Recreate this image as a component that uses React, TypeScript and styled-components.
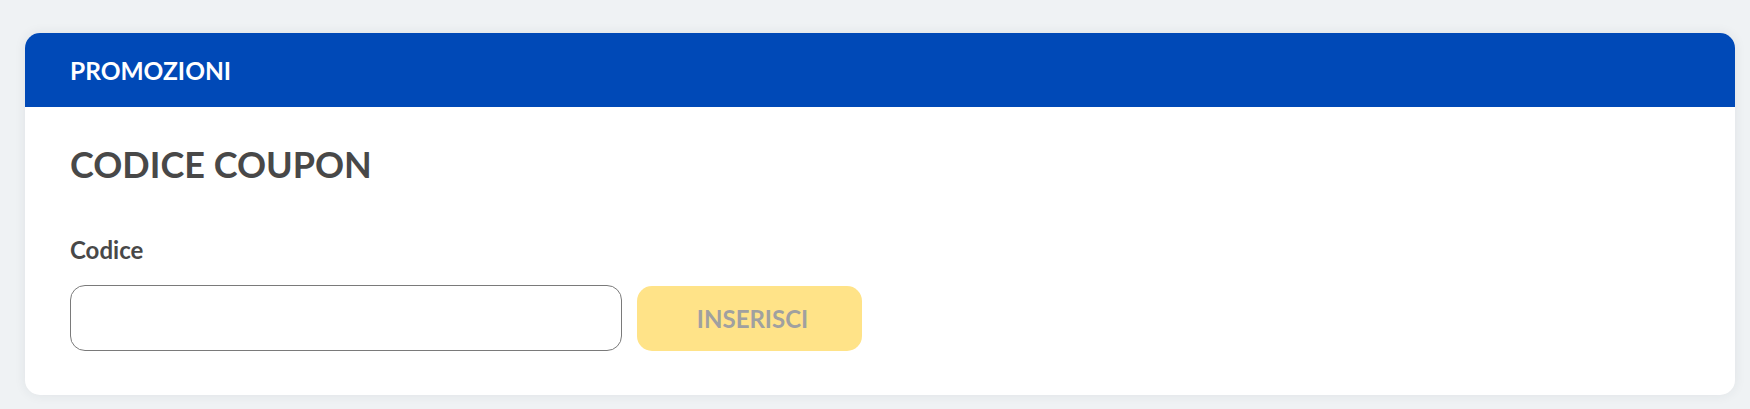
import * as React from 'react';
import styled, { createGlobalStyle } from 'styled-components';

const GlobalStyle = createGlobalStyle`
  html, body {
    margin: 0;
    padding: 0;
    background: #eff2f4;
    font-family: Lato, 'Open Sans', sans-serif;
  }
`;

const Page = styled.div`
  padding: 33px 15px 14px 25px;
`;

const Card = styled.section`
  background: #fff;
  border-radius: 15px;
  box-shadow: 0 0 12px rgba(40, 50, 60, 0.08);
  overflow: hidden;
`;

const CardHeader = styled.header`
  display: flex;
  align-items: center;
  height: 74px;
  padding: 0 45px;

  background: #0049b7;
  color: #fff;
`;

const HeaderTitle = styled.h2`
  margin: 0;
  font-size: 24.5px;
  font-weight: 700;
`;

const CardBody = styled.div`
  display: flex;
  flex-direction: column;
  padding: 38px 45px 44px;
`;

const SectionTitle = styled.h3`
  margin: 0 0 55px 0;
  font-size: 36px;
  line-height: 38px;
  font-weight: 700;
  color: #484848;
`;

const Label = styled.label`
  margin-bottom: 23px;
  font-size: 24px;
  line-height: 24px;
  font-weight: 700;
  color: #484848;
`;

const FormRow = styled.div`
  display: flex;
  align-items: center;
  gap: 15px;
`;

const TextInput = styled.input`
  box-sizing: border-box;
  width: 552px;
  height: 66px;
  padding: 0 18px;

  font-family: inherit;
  font-size: 20px;
  color: #484848;

  background: #fff;
  border: 1px solid #7a7a7a;
  border-radius: 15px;
  outline: none;
`;

const SubmitButton = styled.button<{ $disabled?: boolean }>`
  box-sizing: border-box;
  width: 225px;
  height: 65px;
  padding: 0 0 0 6px;

  font-family: inherit;
  font-size: 24px;
  font-weight: 700;
  color: ${(p) => (p.$disabled ? '#a0a0a0' : '#333')};

  background: ${(p) => (p.$disabled ? '#ffe388' : '#ffc600')};
  border: none;
  border-radius: 15px;
`;

const App: React.FunctionComponent = () => {
  const [code, setCode] = React.useState('');

  return (
    <Page>
      <GlobalStyle />
      <Card>
        <CardHeader>
          <HeaderTitle>PROMOZIONI</HeaderTitle>
        </CardHeader>
        <CardBody>
          <SectionTitle>CODICE COUPON</SectionTitle>
          <Label htmlFor='coupon'>Codice</Label>
          <FormRow>
            <TextInput id='coupon' value={code} onChange={(e) => setCode(e.target.value)} />
            <SubmitButton $disabled={code.length === 0}>INSERISCI</SubmitButton>
          </FormRow>
        </CardBody>
      </Card>
    </Page>
  );
};

export default App;
